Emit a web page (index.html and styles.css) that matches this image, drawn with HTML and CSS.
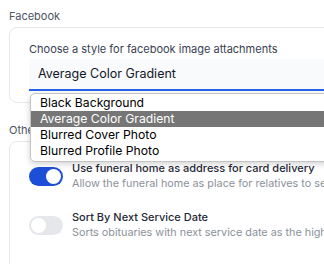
FILE: index.html
```html
<!DOCTYPE html>
<html lang="en">
<head>
    <meta charset="UTF-8">
    <meta name="viewport" content="width=device-width, initial-scale=1.0">
    <title>Settings</title>
    <link rel="stylesheet" href="styles.css">
</head>
<body>
    <main class="page">
        <section class="group">
            <h2 class="group-title">Facebook</h2>
            <div class="card">
                <label class="field-label">Choose a style for facebook image attachments</label>
                <div class="select-wrap">
                    <div class="select">Average Color Gradient</div>
                    <ul class="dropdown">
                        <li>Black Background</li>
                        <li class="active">Average Color Gradient</li>
                        <li>Blurred Cover Photo</li>
                        <li>Blurred Profile Photo</li>
                    </ul>
                </div>
            </div>
        </section>
        <section class="group">
            <h2 class="group-title">Other</h2>
            <div class="card card-list">
                <div class="setting">
                    <span class="toggle on"><span class="knob"></span></span>
                    <div class="setting-text">
                        <div class="setting-title">Use funeral home as address for card delivery</div>
                        <div class="setting-desc">Allow the funeral home as place for relatives to send cards</div>
                    </div>
                </div>
                <div class="setting">
                    <span class="toggle"><span class="knob"></span></span>
                    <div class="setting-text">
                        <div class="setting-title">Sort By Next Service Date</div>
                        <div class="setting-desc">Sorts obituaries with next service date as the highest priority</div>
                    </div>
                </div>
            </div>
        </section>
    </main>
</body>
</html>
```

FILE: styles.css
```css
body {
    font-family: Inter, "Noto Sans", sans-serif;
    margin: 0;
    padding: 0;
    background-color: #fff;
    overflow: hidden;
}
.page {
    width: 560px;
    padding: 8px 0 0 9px;
}
.group {
    margin-bottom: 19px;
}
.group-title {
    margin: 0 0 3px;
    font-size: 11px;
    line-height: 16px;
    font-weight: 400;
    color: #4b5563;
}
.card {
    border: 1px solid #e5e7eb;
    border-radius: 8px;
    padding: 13px 19px 11px;
    background-color: #fff;
}
.field-label {
    display: block;
    font-size: 11px;
    line-height: 16px;
    color: #374151;
    margin-bottom: 2px;
}
.select-wrap {
    position: relative;
}
.select {
    height: 30px;
    line-height: 30px;
    padding-left: 9px;
    font-size: 12.5px;
    color: #111827;
    background-color: #f9fafb;
    border-bottom: 2px solid #2563eb;
}
.dropdown {
    position: absolute;
    top: 34px;
    left: 1px;
    width: 420px;
    margin: 0;
    padding: 1px 0 2px;
    list-style: none;
    background-color: #fff;
    border: 1px solid #c4c4c4;
    border-radius: 5px;
    box-shadow: 0 2px 6px rgba(0, 0, 0, 0.18);
    z-index: 2;
}
.dropdown li {
    height: 16px;
    line-height: 16px;
    padding-left: 9px;
    font-size: 12.2px;
    color: #000;
}
.dropdown li.active {
    background-color: #767676;
    color: #fff;
}
.card-list {
    padding: 18px 19px 40px;
}
.setting {
    display: flex;
    align-items: center;
    gap: 9px;
    margin-bottom: 17px;
}
.toggle {
    position: relative;
    flex: none;
    width: 34px;
    height: 19px;
    border-radius: 10px;
    background-color: #e5e7eb;
}
.toggle .knob {
    position: absolute;
    top: 2px;
    left: 2px;
    width: 15px;
    height: 15px;
    border-radius: 50%;
    background-color: #fff;
}
.toggle.on {
    background-color: #1d4ed8;
}
.toggle.on .knob {
    left: 17px;
}
.setting-text {
    white-space: nowrap;
}
.setting-title {
    font-size: 11px;
    line-height: 16px;
    font-weight: 500;
    color: #1f2937;
}
.setting-desc {
    font-size: 10.8px;
    line-height: 16px;
    color: #8b919a;
}
```
